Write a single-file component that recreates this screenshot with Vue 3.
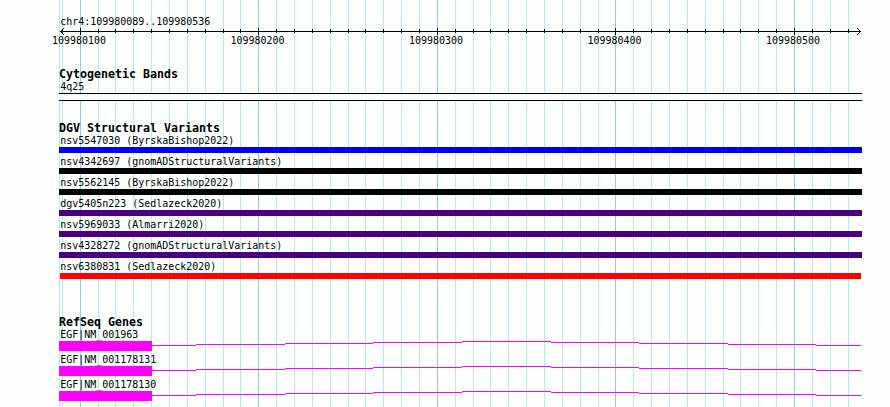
<script setup>
const start = [59, 62]
const minor = [98, 115, 133, 151, 169, 187, 205, 223, 240, 276, 294, 312, 330, 348, 365, 383, 401, 419,
  455, 473, 490, 508, 526, 544, 562, 580, 598, 633, 651, 669, 687, 705, 723, 740, 758, 776, 812, 830, 848]
const major = [80, 258, 437, 615, 794]
const scale = [109980100, 109980200, 109980300, 109980400, 109980500]
const variants = [
  { name: 'nsv5547030 (ByrskaBishop2022)', tone: 'blue' },
  { name: 'nsv4342697 (gnomADStructuralVariants)', tone: 'black' },
  { name: 'nsv5562145 (ByrskaBishop2022)', tone: 'black' },
  { name: 'dgv5405n223 (Sedlazeck2020)', tone: 'indigo' },
  { name: 'nsv5969033 (Almarri2020)', tone: 'indigo' },
  { name: 'nsv4328272 (gnomADStructuralVariants)', tone: 'indigo' },
  { name: 'nsv6380831 (Sedlazeck2020)', tone: 'red' },
]
const genes = ['EGF|NM_001963', 'EGF|NM_001178131', 'EGF|NM_001178130']
const intron = 'M93 4.5H137M137 3.5H226M226 2.5H314M314 1.5H403M403 .5H492M492 1.5H580M580 2.5H669M669 3.5H757M757 4.5H802'
</script>

<template>
  <main class="browser">
    <svg class="grid" width="890" height="407" shape-rendering="crispEdges">
      <rect v-for="x in [...start, ...minor]" :key="x" :x="x" y="0" width="1" height="407" fill="#afeeee" />
      <rect v-for="x in major" :key="x" :x="x" y="0" width="1" height="407" fill="#87ceeb" />
    </svg>
    <div class="tracks">
      <header class="ruler">
        <div class="label region">chr4:109980089..109980536</div>
        <svg class="axis" width="803" height="7" viewBox="59 28 803 7" shape-rendering="crispEdges">
          <rect x="60" y="31" width="801" height="1" />
          <rect v-for="x in [62, ...minor]" :key="x" :x="x" y="29" width="1" height="4" />
          <rect v-for="x in major" :key="x" :x="x" y="28" width="1" height="7" />
          <path d="M61 30h1v1h-1zM62 29h1v1h-1zM63 28h1v1h-1zM61 32h1v1h-1zM62 33h1v1h-1zM63 34h1v1h-1zM859 30h1v1h-1zM858 29h1v1h-1zM857 28h1v1h-1zM859 32h1v1h-1zM858 33h1v1h-1zM857 34h1v1h-1z" />
        </svg>
        <div class="scale"><span v-for="s in scale" :key="s" class="label">{{ s }}</span></div>
      </header>
      <section class="cyto">
        <h2>Cytogenetic Bands</h2>
        <div class="label">4q25</div>
        <div class="band"></div>
      </section>
      <section class="variants">
        <h2>DGV Structural Variants</h2>
        <div v-for="v in variants" :key="v.name" class="variant">
          <div class="label">{{ v.name }}</div>
          <div class="bar" :class="v.tone"></div>
        </div>
      </section>
      <section class="genes">
        <h2>RefSeq Genes</h2>
        <div v-for="g in genes" :key="g" class="gene">
          <div class="label">{{ g }}</div>
          <svg class="model" width="803" height="10" shape-rendering="crispEdges">
            <rect width="93" height="10" fill="#f0f" />
            <path :d="intron" stroke="#f0f" fill="none" />
          </svg>
        </div>
      </section>
    </div>
  </main>
</template>

<style>
body { background: #fdfffc; overflow: hidden; }
</style>
<style scoped>
.browser { display: grid; width: 890px; height: 407px; overflow: hidden; color: #000; background: #fdfffc; }
.grid, .tracks { grid-area: 1 / 1; }
svg { display: block; }
.tracks { z-index: 1; width: 803px; padding: 15px 0 0 59px; }
.label { height: 12px; padding-left: 1.3px; font: 9.97px/14px "DejaVu Sans Mono", monospace; white-space: pre; }
h2 { height: 12px; margin: 0; font: bold 11.63px/12px "DejaVu Sans Mono", monospace; white-space: pre; }
.ruler { height: 53px; }
.region { height: 13px; }
.scale { display: flex; gap: 124.5px; margin-left: -7px; }
.scale .label { width: 54px; padding: 0; line-height: 12px; }
.cyto { height: 54px; }
.band { height: 6px; margin-top: 1px; border: solid #000; border-width: 1px 0; background: #fdfffc; }
.variants { height: 194px; }
.variant { height: 21px; }
.bar { height: 6px; margin-top: 1px; }
.blue { background: #00f; }
.black { background: #000; }
.indigo { background: #4b0082; }
.red { margin-left: 1px; margin-right: 1px; background: #f00; }
.gene { height: 25px; }
.model { margin-top: 1px; }
</style>
